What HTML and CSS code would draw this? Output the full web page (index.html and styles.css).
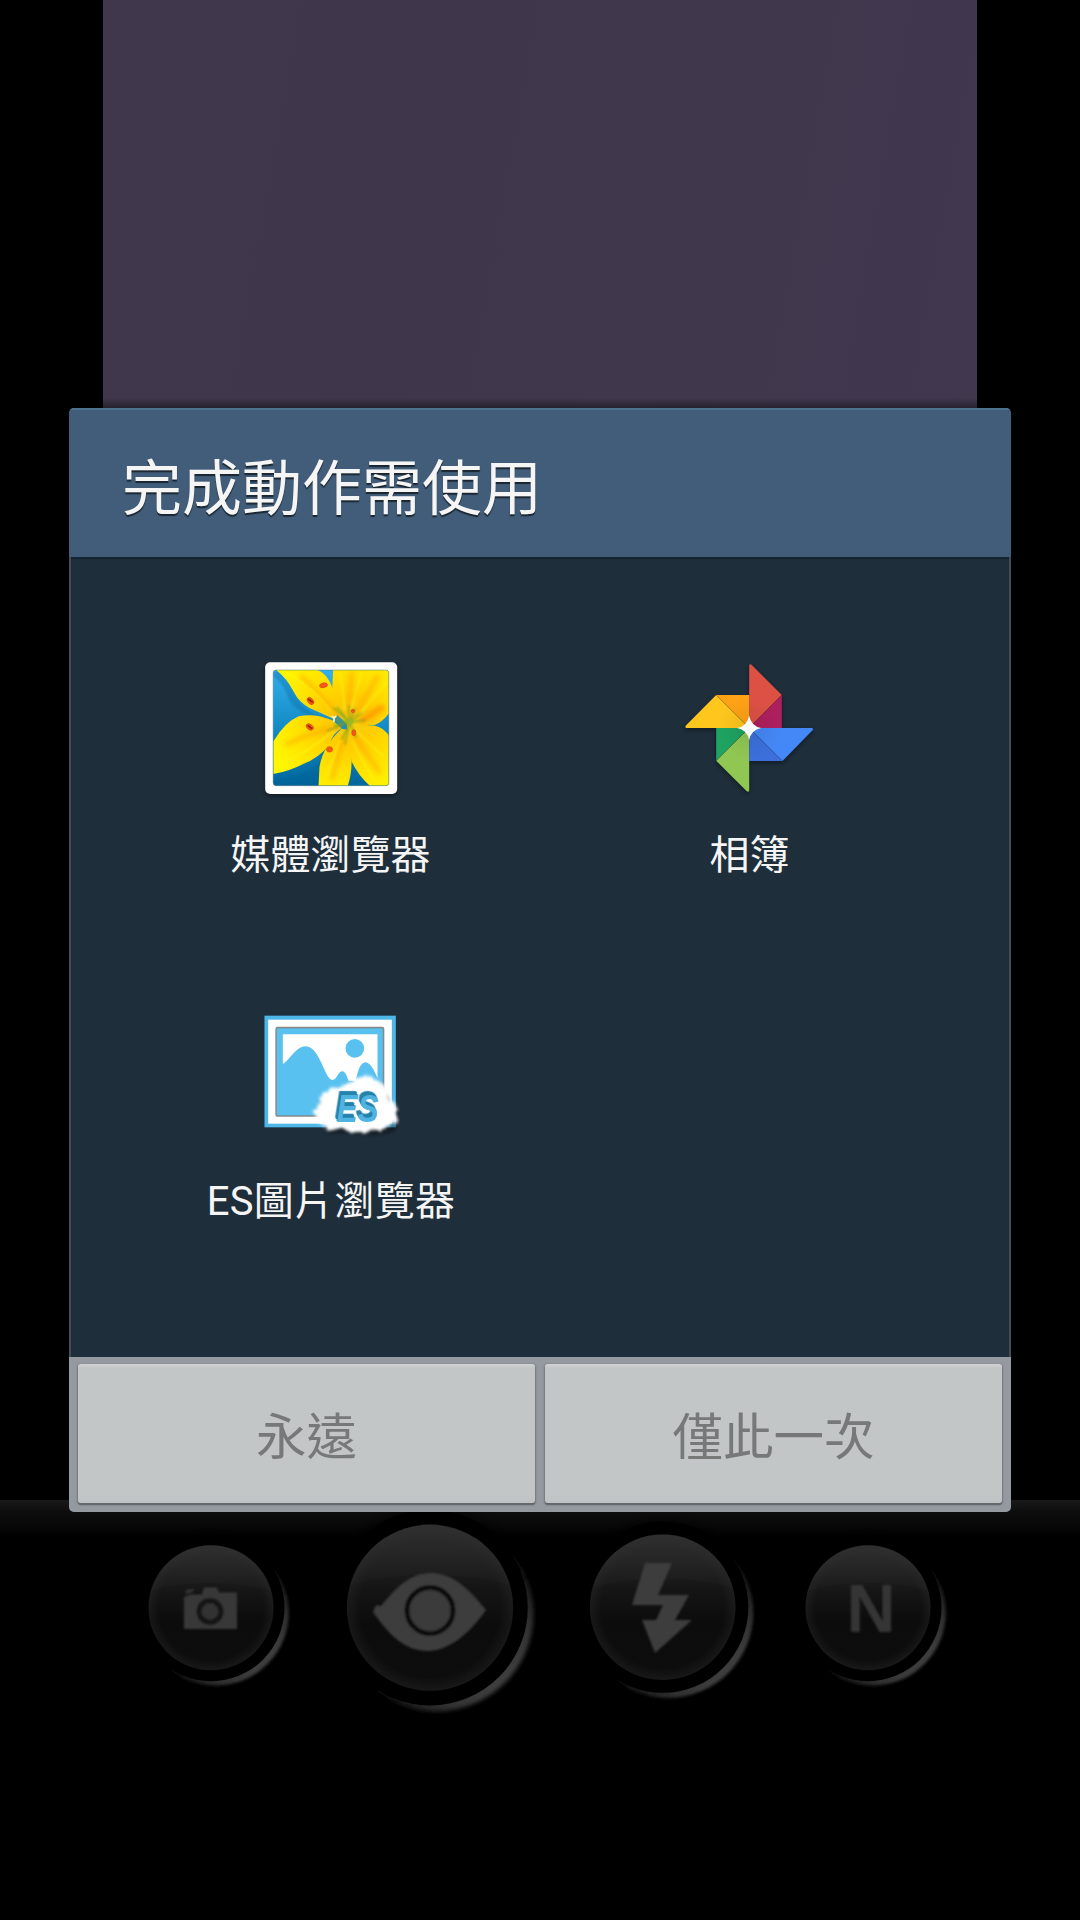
FILE: index.html
```html
<!DOCTYPE html>
<html lang="zh-Hant">
<head>
<meta charset="utf-8">
<title>完成動作需使用</title>
<link rel="stylesheet" href="styles.css">
</head>
<body>
<div class="screen">
  <div class="preview"></div>
  <div class="toolbar">
    <svg class="controls" viewBox="0 1500 1080 260">
      <defs>
        <linearGradient id="face" x1="0" y1="0" x2="0" y2="1">
          <stop offset="0" stop-color="#2c2c2c"/><stop offset=".2" stop-color="#212121"/><stop offset=".38" stop-color="#151515"/><stop offset=".6" stop-color="#0c0c0c"/><stop offset="1" stop-color="#0d0d0d"/>
        </linearGradient>
        <radialGradient id="rim"><stop offset=".84" stop-color="#333" stop-opacity="0"/><stop offset="1" stop-color="#333" stop-opacity=".3"/></radialGradient>
        <filter id="soft" x="-20%" y="-20%" width="140%" height="140%"><feGaussianBlur stdDeviation="1.5"/></filter>
        <filter id="halo" x="-20%" y="-20%" width="140%" height="140%"><feGaussianBlur stdDeviation="5"/></filter>
        <filter id="edge" x="-10%" y="-10%" width="120%" height="120%"><feGaussianBlur stdDeviation="1"/></filter>
        <linearGradient id="arc" x1=".25" y1=".25" x2=".85" y2=".85"><stop offset=".42" stop-color="#000"/><stop offset="1" stop-color="#404040"/></linearGradient>
        <g id="disc">
          <circle r="74" fill="#000" filter="url(#halo)"/>
          <circle cx="4.700" cy="4.800" r="73" fill="url(#arc)" filter="url(#soft)"/>
          <circle r="73.5" fill="#000"/>
          <circle r="62.5" fill="url(#face)"/>
          <path d="M-60-17A62.5 62.5 0 0 1 60-17C26-27-26-27-60-17Z" fill="#fff" opacity=".015"/>
          <circle r="62.5" fill="url(#rim)"/>
        </g>
      </defs>
      <use href="#disc" transform="translate(211 1607.7)"/>
      <use href="#disc" transform="translate(430 1607.7) scale(1.33)"/>
      <use href="#disc" transform="translate(662.7 1607.2) scale(1.165)"/>
      <use href="#disc" transform="translate(868 1607.7)"/>
      <g fill="#373737" filter="url(#edge)">
        <path d="M184 1597l6-2.500h12l2-7h13l2 5h18v36.500h-53z"/>
        <path d="M186 1590l9-1-3 3-6 2z"/>
        <circle cx="210" cy="1611.500" r="11" fill="#323232" stroke="#121212" stroke-width="5"/>
        <path fill="#3c3c3c" d="M373 1612L376 1605L381 1606C395 1589 409 1573 431 1573C453 1573 470 1590 486 1610C470 1633 449 1651 428 1651C405 1651 389 1635 373 1612Z"/>
        <circle cx="430" cy="1610.500" r="23" fill="#3a3a3a" stroke="#101010" stroke-width="5"/>
        <path fill="#3d3d3d" d="M645 1563h27l-14 32h31l-14 25h17l-37 33-13-33h14l7-15h-31z"/>
        <text class="mode-letter" x="871" y="1632">N</text>
      </g>
    </svg>
  </div>

  <section class="dialog">
    <header class="dialog-title">完成動作需使用</header>
    <div class="apps">
      <div class="app">
        <svg class="app-icon shadow" viewBox="2.5 0 480 480">
          <defs>
            <linearGradient id="sky" x1="0" y1="0" x2="0" y2="1"><stop offset="0" stop-color="#35b0ee"/><stop offset=".5" stop-color="#138bc4"/><stop offset="1" stop-color="#00659a"/></linearGradient>
            <radialGradient id="petal" gradientUnits="userSpaceOnUse" cx="295" cy="215" r="240"><stop offset="0" stop-color="#f0d018"/><stop offset=".3" stop-color="#ffcc00"/><stop offset=".6" stop-color="#ffe000"/><stop offset="1" stop-color="#fff600"/></radialGradient>
            <clipPath id="photo"><rect x="69" y="60" width="347" height="347" rx="9"/></clipPath>
            <filter id="blur6"><feGaussianBlur stdDeviation="6"/></filter>
            <filter id="blur2"><feGaussianBlur stdDeviation="2.500"/></filter>
          </defs>
          <rect x="45" y="37" width="396" height="395" rx="15" fill="#fff"/>
          <g clip-path="url(#photo)">
            <path fill="url(#sky)" d="M60 50h366v366H60z"/>
            <path fill="#005d91" opacity=".3" filter="url(#blur2)" d="M69 66L88 60L135 130Q155 185 240 213L205 207Q120 180 112 135Q95 95 69 80ZM69 385Q180 392 235 300L215 407H69Z"/>
            <g fill="url(#petal)">
              <path d="M78 60H202Q232 70 248 116L264 192L252 208Q215 190 178 174Q145 155 131 126Q110 84 78 60Z"/>
              <path d="M249 60H420V185Q400 215 372 226L300 232L262 195L246 118Z"/>
              <path d="M69 275Q105 215 146 199Q194 188 247 211L274 235Q248 250 237 285Q205 325 159 342Q115 365 69 372Z"/>
              <path d="M274 236Q219 287 208 350L205 410H292Q306 370 304 325L300 240Z"/>
              <path d="M290 225L374 227Q401 232 420 262V410H362Q326 380 304 334Z"/>
            </g>
            <g fill="none" stroke="#ff9c00" stroke-width="12" opacity=".5" filter="url(#blur6)">
              <path d="M150 75Q215 135 268 205M305 65L292 200M385 75L308 205M105 285Q180 245 272 230M245 390L280 260M390 370L308 250"/>
              <path d="M400 170L330 215" stroke="#ff7600" stroke-width="20"/>
            </g>
            <g fill="none" stroke="#fffa18" stroke-width="5" opacity=".55" filter="url(#blur2)"><path d="M105 68Q190 110 243 185M270 65L285 180M335 65L300 185M410 95L325 195M80 345Q170 310 253 240M225 390L270 270M400 320L315 240M370 390L306 275"/></g>
            <g stroke="#7e9f15" stroke-width="5" fill="none" opacity=".75" filter="url(#blur2)"><path d="M298 217L249 172M298 217L261 171M298 217L230 243M298 217L275 269M298 217L284 284M298 217L318 262M298 217L347 210M298 217L334 188M298 217L296 166M298 217L251 226M298 217L244 207M298 217L315 175"/></g>
            <circle cx="300" cy="215" r="9" fill="#9db725"/>
            <g fill="#f45914" stroke="#d94312" stroke-width="2">
              <ellipse cx="220" cy="106" rx="12" ry="7" transform="rotate(-12 220 106)"/><ellipse cx="181" cy="153" rx="12" ry="8" transform="rotate(48 181 153)"/><ellipse cx="179" cy="231" rx="12" ry="8" transform="rotate(35 179 231)"/><ellipse cx="238" cy="298" rx="9" ry="8"/><ellipse cx="311" cy="248" rx="6" ry="9"/><circle cx="308" cy="183" r="5"/>
            </g>
            <path d="M174 147L188 157M173 226L185 236" stroke="#912208" stroke-width="5"/>
            <path d="M244 198L252 204L258 198M252 204L251 216" stroke="#fff5c8" stroke-width="5" fill="none"/>
          </g>
          <rect x="69" y="60" width="347" height="347" rx="9" fill="none" stroke="#4b7780" stroke-width="2.500" opacity=".6"/>
        </svg>
        <span class="app-name">媒體瀏覽器</span>
      </div>
      <div class="app">
        <svg class="app-icon shadow" viewBox="-.5 0 480 480">
          <defs>
            <radialGradient id="warm" gradientUnits="userSpaceOnUse" cx="237" cy="234" r="190"><stop offset="0" stop-color="#000" stop-opacity=".08"/><stop offset=".5" stop-color="#000" stop-opacity="0"/></radialGradient>
          </defs>
          <path fill="#dd5145" d="M237 234V47Q238 40 244 44L335 135Z"/>
          <path fill="#ae1f5e" d="M237 234L335 135V234Z"/>
          <path fill="#ffa216" d="M138 135H237V234Z"/>
          <path fill="#ffc61e" d="M237 234H49Q43 232 48 226L138 135Z"/>
          <path fill="#1ea362" d="M138 234H237L138 332Z"/>
          <path fill="#90c652" d="M237 234V422Q235 428 229 423L138 332Z"/>
          <path fill="#3c6fdb" d="M237 234V333H337Z"/>
          <path fill="#4487f6" d="M237 234H425Q431 236 427 241L337 333Z"/>
          <path fill="url(#warm)" d="M138 135H335V333H138Z"/>
          <path stroke="#000" stroke-opacity=".2" stroke-width="2" d="M138 135L337 333M335 135L138 332"/>
          <path fill="#fafafa" d="M237 197Q243 228 273 234Q243 240 237 270Q231 240 201 234Q231 228 237 197Z"/>
        </svg>
        <span class="app-name">相簿</span>
      </div>
      <div class="app">
        <svg class="app-icon" viewBox="1.5 -12 480 480">
          <defs>
            <filter id="cloud" x="-20%" y="-30%" width="140%" height="170%">
              <feTurbulence type="fractalNoise" baseFrequency=".06" numOctaves="3" seed="4" result="n"/>
              <feDisplacementMap in="SourceGraphic" in2="n" scale="24" xChannelSelector="R" yChannelSelector="G"/>
              <feGaussianBlur stdDeviation="4"/>
            </filter>
            <filter id="frame"><feGaussianBlur stdDeviation="2"/></filter>
          </defs>
          <rect x="42" y="47" width="394" height="335" fill="#4db8e8"/>
          <rect x="53" y="59" width="371" height="312" fill="#fff"/>
          <rect x="77" y="83" width="322" height="265" rx="4" fill="#777" stroke="#888" stroke-width="5" filter="url(#frame)"/>
          <rect x="79" y="85" width="318" height="261" fill="#59c1ef"/>
          <path fill="#fff" d="M97 103H381V235Q362 187 344 187Q329 190 321 220L315 242H294Q285 214 276 214C262 214 260 240 246 240C222 240 209 139 165 139C135 139 110 191 97 191Z"/>
          <circle cx="313" cy="145" r="28" fill="#59c1ef"/>
          <path fill="#000" opacity=".35" filter="url(#halo)" d="M205 325Q220 270 300 265Q400 230 420 310Q465 350 430 395Q370 415 310 400L230 400Z"/>
          <path fill="#fff" filter="url(#cloud)" d="M193 326Q209 317 205 299Q225 260 282 256Q306 230 348 228Q388 235 400 260Q414 282 414 302Q446 311 437 336Q447 364 423 373Q405 392 375 387Q345 405 323 390Q292 402 267 385Q247 393 229 390Q215 371 203 365L193 346L186 337Z"/>
          <text class="badge-text" x="259" y="366" textLength="126" lengthAdjust="spacingAndGlyphs">ES</text>
        </svg>
        <span class="app-name latin-mix">ES圖片瀏覽器</span>
      </div>
    </div>
    <footer class="actions">
      <button class="action">永遠</button>
      <button class="action">僅此一次</button>
    </footer>
  </section>
</div>
</body>
</html>
```
FILE: styles.css
```css
* { box-sizing: border-box; }

body {
  margin: 0;
  background: #000;
  font-family: Roboto, "Noto Sans CJK TC", sans-serif;
}

.screen {
  position: relative;
  display: flex;
  flex-direction: column;
  width: 1080px;
  height: 1920px;
  overflow: hidden;
}

.preview {
  width: 874px;
  height: 1500px;
  margin: 0 auto;
  background:
    linear-gradient(transparent 398px, rgba(0, 0, 0, .4) 408px, #000 410px),
    linear-gradient(100deg, #41374c, #40364b 30%, #41374c 50%, #40374e 75%, #42384d);
}

.toolbar {
  height: 420px;
  background: linear-gradient(#1a1a1a, #0d0d0d 12px, #090909 24px, #000 38px);
}

.controls {
  display: block;
  width: 1080px;
  height: 260px;
}

.mode-letter {
  fill: #363636;
  font: bold 68px "Liberation Sans", sans-serif;
  text-anchor: middle;
}

/* The chooser floats over the camera screen. */
.dialog {
  position: absolute;
  top: 408px;
  left: 69px;
  display: flex;
  flex-direction: column;
  width: 942px;
  height: 1104px;
  border-radius: 5px;
  overflow: hidden;
  background: #1e2e3b;
}

.dialog-title {
  height: 149px;
  padding-left: 53px;
  border-top: 2px solid #4e718f;
  background: #415d79;
  color: #f5f5f5;
  font-size: 60px;
  line-height: 160px;
  text-shadow: 0 2px 1px rgba(0, 0, 0, .6);
}

.apps {
  display: grid;
  grid-template-columns: 419px 419px;
  grid-auto-rows: 346px;
  height: 800px;
  padding: 93px 0 0 50px;
  border: solid #454d54;
  border-width: 0 2px;
  background: #1e2e3b;
  box-shadow: inset 0 2px 1px #152431;
}

.app {
  display: flex;
  flex-direction: column;
  align-items: center;
}

.app-icon {
  width: 160px;
  height: 160px;
}

.shadow {
  filter: drop-shadow(0 2px 2px rgba(0, 0, 0, .4));
}

.badge-text {
  fill: #4fb3e2;
  font: italic bold 116px "Liberation Sans", sans-serif;
  text-shadow: -2px -3px 1px #2582ab;
  filter: drop-shadow(-2px -3px 1px #2582ab);
}

.app-name {
  margin-top: 17px;
  color: #f5f5f5;
  font-size: 40px;
  line-height: 58px;
  white-space: nowrap;
}

.latin-mix {
  padding-left: 1px;
  letter-spacing: .3px;
}

.actions {
  display: flex;
  gap: 10px;
  height: 155px;
  padding: 7px 9px 9px;
  background: #959aa0;
}

.action {
  flex: 1;
  height: 139px;
  padding: 0 0 1px;
  border: 0;
  border-radius: 3px;
  background: linear-gradient(#d2d3d4, #c2c6c7 4px, #c2c6c7 130px, #bec2c2);
  box-shadow: 0 2px 1px #64686d, 0 1px 2px 1px #777b80;
  color: #777979;
  font: 50.5px Roboto, "Noto Sans CJK TC", sans-serif;
}
```
